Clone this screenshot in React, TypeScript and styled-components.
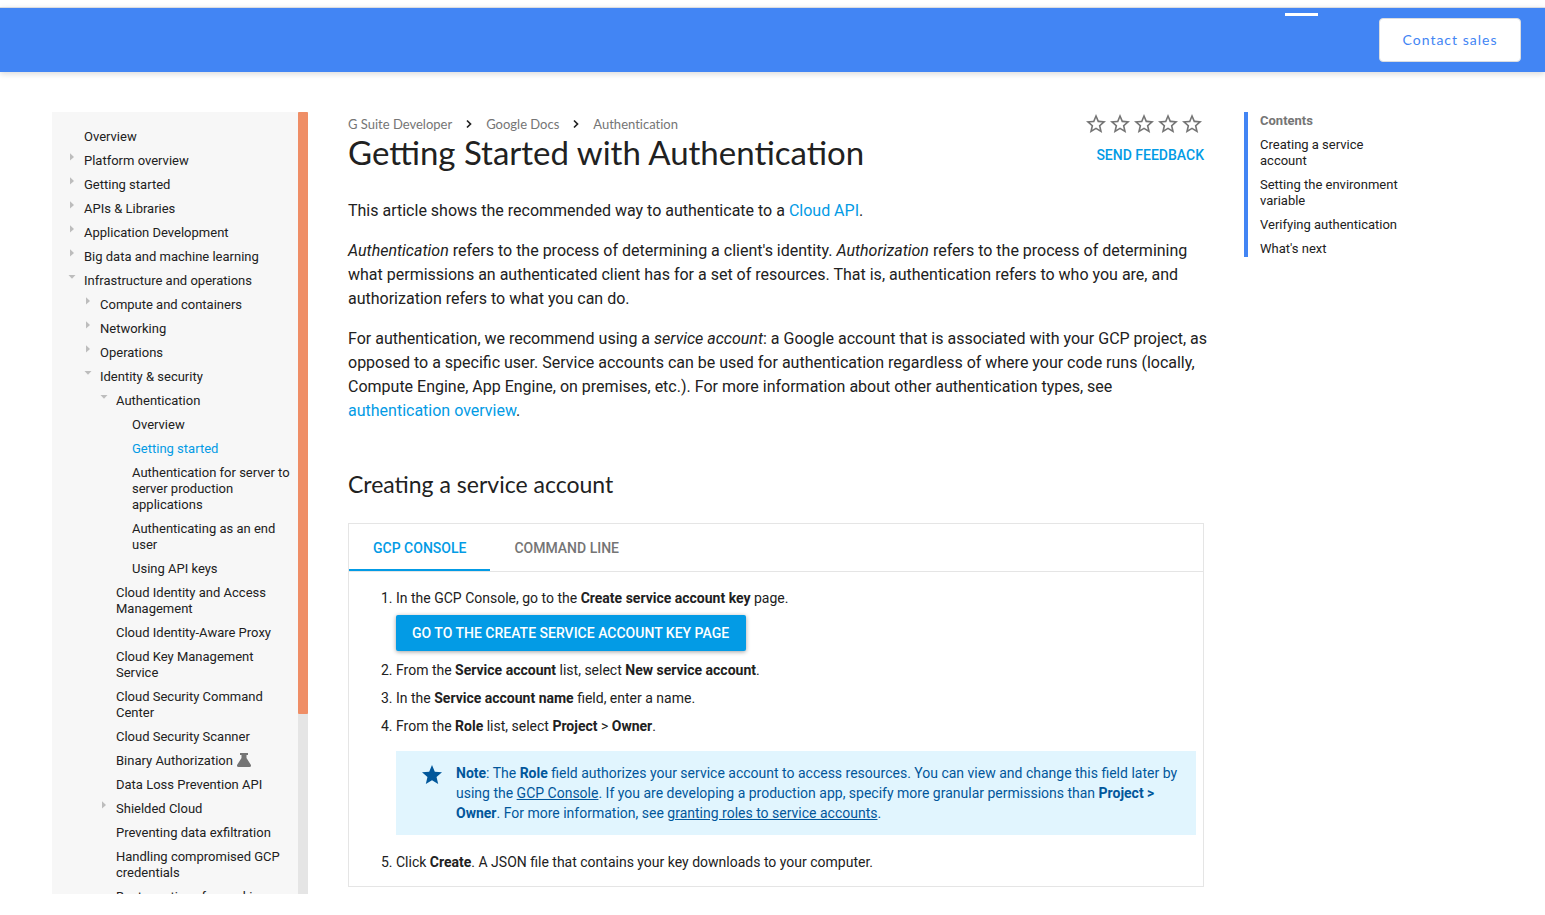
import React from "react";
import styled, { createGlobalStyle } from "styled-components";

const heading = `Lato, "Open Sans", sans-serif`;

const GlobalStyle = createGlobalStyle`
  *, *::before, *::after { box-sizing: border-box; }
  body {
    margin: 0;
    background: #fff;
    color: #212121;
    font: 400 16px/24px Roboto, sans-serif;
  }
  a { color: #039be5; text-decoration: none; }
`;

const Page = styled.div`
  padding-top: 7px;
  display: flex;
  flex-direction: column;
`;

const TopBar = styled.header`
  display: flex;
  justify-content: flex-end;
  align-items: flex-start;
  gap: 61px;
  height: 65px;
  padding: 0 24px;
  border-top: 1px solid #dadce0;
  background: #4285f4;
  box-shadow: 0 2px 6px rgba(0, 0, 0, 0.15);
`;

const TabMark = styled.span`
  width: 33px;
  height: 3px;
  margin-top: 5px;
  background: #fff;
`;

const SalesButton = styled.button`
  height: 44px;
  width: 142px;
  margin-top: 10px;
  padding: 0;
  border: 1px solid #dadce0;
  border-radius: 4px;
  background: #fff;
  color: #4285f4;
  font: 400 14px/24px ${heading};
  letter-spacing: 1px;
`;

const Body = styled.div`
  display: flex;
  align-items: flex-start;
  gap: 40px;
  padding: 40px 145px 21px 52px;
`;

const Sidebar = styled.nav`
  display: flex;
  flex: 0 0 256px;
  height: calc(100vh - 133px);
  overflow: hidden;
  background: #f7f7f7;
`;

const NavList = styled.ul`
  flex: 1;
  margin: 0;
  padding: 13px 8px 0 16px;
  list-style: none;
`;

const NavItem = styled.li<{ $level: number }>`
  display: flex;
  align-items: flex-start;
  padding: 4px 0 4px ${(p) => p.$level * 16}px;
`;

const ArrowSlot = styled.span`
  display: flex;
  flex: 0 0 16px;
  color: #bdbdbd;
`;

const NavLink = styled.a<{ $current?: boolean }>`
  color: ${(p) => (p.$current ? "#039be5" : "#212121")};
  font-size: 13px;
  line-height: 16px;
`;

const FlaskSlot = styled.span`
  display: flex;
  margin-left: 4px;
`;

const ScrollTrack = styled.div`
  flex: 0 0 10px;
  background: #e5e5e5;
`;

const ScrollThumb = styled.div`
  height: 77%;
  border-radius: 1px;
  background: #ef8e66;
`;

const Article = styled.main`
  flex: 1;
  min-width: 0;
`;

const ArticleHead = styled.div`
  display: flex;
  justify-content: space-between;
`;

const Crumbs = styled.nav`
  display: flex;
  align-items: center;
  gap: 14px;
  height: 24px;
  font: 400 13px/24px ${heading};
  font-variant-ligatures: none;
  a { color: #757575; }
`;

const Title = styled.h1`
  margin: 0;
  font: 400 33px/32px ${heading};
`;

const Rating = styled.div`
  display: flex;
  flex-direction: column;
  align-items: flex-end;
  gap: 7px;
`;

const Stars = styled.div`
  display: flex;
`;

const StarButton = styled.button`
  display: flex;
  padding: 0;
  border: 0;
  background: none;
  color: #757575;
`;

const Feedback = styled.button`
  padding: 0;
  border: 0;
  background: none;
  color: #039be5;
  font: 500 14px/24px Roboto, sans-serif;
`;

const Text = styled.p`
  margin: 16px -8px 16px 0;
  &:first-of-type { margin-top: 31px; }
`;

const Subtitle = styled.h2`
  margin: 45px 0 23px;
  font: 400 23px/32px ${heading};
`;

const Panel = styled.section`
  border: 1px solid #e5e5e5;
`;

const Tabs = styled.div`
  display: flex;
  height: 48px;
  border-bottom: 1px solid #e5e5e5;
`;

const Tab = styled.button<{ $active?: boolean }>`
  padding: 2px 24px 0;
  border: 0;
  border-bottom: 2px solid ${(p) => (p.$active ? "#039be5" : "transparent")};
  background: none;
  color: ${(p) => (p.$active ? "#039be5" : "#757575")};
  font: 500 14px/24px Roboto, sans-serif;
`;

const Steps = styled.ol`
  display: flex;
  flex-direction: column;
  gap: 8px;
  margin: 0;
  padding: 16px 7px 14px 47px;
  font-size: 14px;
  line-height: 20px;
`;

const KeyButton = styled.a`
  display: block;
  width: fit-content;
  margin: 7px 0 1px;
  padding: 0 17px 0 16px;
  border-radius: 2px;
  background: #039be5;
  box-shadow: 0 1px 4px rgba(0, 0, 0, 0.37);
  color: #fff;
  font-weight: 500;
  line-height: 36px;
`;

const Note = styled.aside`
  display: flex;
  gap: 12px;
  margin: 15px 0 9px;
  padding: 12px 12px 12px 24px;
  background: #e1f5fe;
  color: #01579b;
  line-height: 20px;
  a { color: inherit; text-decoration: underline; }
  svg { flex: none; }
`;

const Contents = styled.nav`
  flex: 0 0 156px;
  border-left: 4px solid #4285f4;
  padding: 1px 0 0 12px;
  font-size: 13px;
  line-height: 16px;
`;

const ContentsTitle = styled.h2`
  margin: 0;
  color: #757575;
  font-size: 13px;
  font-weight: 700;
  line-height: 16px;
`;

const ContentsList = styled.ul`
  display: flex;
  flex-direction: column;
  gap: 8px;
  margin: 8px 0 0;
  padding: 0;
  list-style: none;
  a { color: #212121; }
`;

type Item = {
  text: string;
  level: number;
  arrow?: "closed" | "open";
  current?: boolean;
  beta?: boolean;
};

const items: Item[] = [
  { text: "Overview", level: 0 },
  { text: "Platform overview", level: 0, arrow: "closed" },
  { text: "Getting started", level: 0, arrow: "closed" },
  { text: "APIs & Libraries", level: 0, arrow: "closed" },
  { text: "Application Development", level: 0, arrow: "closed" },
  { text: "Big data and machine learning", level: 0, arrow: "closed" },
  { text: "Infrastructure and operations", level: 0, arrow: "open" },
  { text: "Compute and containers", level: 1, arrow: "closed" },
  { text: "Networking", level: 1, arrow: "closed" },
  { text: "Operations", level: 1, arrow: "closed" },
  { text: "Identity & security", level: 1, arrow: "open" },
  { text: "Authentication", level: 2, arrow: "open" },
  { text: "Overview", level: 3 },
  { text: "Getting started", level: 3, current: true },
  { text: "Authentication for server to server production applications", level: 3 },
  { text: "Authenticating as an end user", level: 3 },
  { text: "Using API keys", level: 3 },
  { text: "Cloud Identity and Access Management", level: 2 },
  { text: "Cloud Identity-Aware Proxy", level: 2 },
  { text: "Cloud Key Management Service", level: 2 },
  { text: "Cloud Security Command Center", level: 2 },
  { text: "Cloud Security Scanner", level: 2 },
  { text: "Binary Authorization", level: 2, beta: true },
  { text: "Data Loss Prevention API", level: 2 },
  { text: "Shielded Cloud", level: 2, arrow: "closed" },
  { text: "Preventing data exfiltration", level: 2 },
  { text: "Handling compromised GCP credentials", level: 2 },
  { text: "Best practices for working", level: 2 },
];

const sections = [
  "Creating a service account",
  "Setting the environment variable",
  "Verifying authentication",
  "What's next",
];

const Arrow = ({ open }: { open: boolean }) => (
  <svg width="8" height="10" viewBox="0 0 8 10" fill="currentColor" aria-hidden="true">
    <path d={open ? "M.5 2h7L4 5.8z" : "M2 .2v7.400L6 3.900z"} />
  </svg>
);

const Flask = () => (
  <svg width="14" height="14" viewBox="0 0 14 14" fill="#757575" aria-label="Beta">
    <path d="M3 0h8v2H9.500v3l4.300 6.800Q14.600 14 12.500 14h-11Q-.6 14 .2 11.800L4.500 5V2H3z" />
  </svg>
);

const OutlineStar = () => (
  <svg width="24" height="24" viewBox="0 0 24 24" fill="currentColor" aria-hidden="true">
    <path d="M22 9.240l-7.190-.62L12 2 9.190 8.630 2 9.240l5.460 4.730L5.820 21 12 17.270 18.180 21l-1.630-7.030L22 9.240zM12 15.400l-3.760 2.270 1-4.280-3.320-2.880 4.380-.38L12 6.100l1.710 4.040 4.380.38-3.320 2.880 1 4.280L12 15.400z" />
  </svg>
);

const SolidStar = () => (
  <svg width="24" height="24" viewBox="0 0 24 24" fill="currentColor" aria-hidden="true">
    <path d="M12 17.270L18.180 21l-1.640-7.030L22 9.240l-7.190-.61L12 2 9.190 8.630 2 9.240l5.460 4.730L5.820 21z" />
  </svg>
);

const Chevron = () => (
  <svg width="6" height="10" viewBox="0 0 6 10" fill="none" stroke="#212121" strokeWidth="1.700" aria-hidden="true">
    <path d="M1 1.500L4.500 5 1 8.500" />
  </svg>
);

export default function App() {
  return (
    <>
      <GlobalStyle />
      <Page>
        <TopBar>
          <TabMark />
          <SalesButton type="button">Contact sales</SalesButton>
        </TopBar>
        <Body>
          <Sidebar aria-label="Documentation">
            <NavList>
              {items.map((item, i) => (
                <NavItem key={i} $level={item.level}>
                  <ArrowSlot>{item.arrow && <Arrow open={item.arrow === "open"} />}</ArrowSlot>
                  <NavLink href="#" $current={item.current}>{item.text}</NavLink>
                  {item.beta && <FlaskSlot><Flask /></FlaskSlot>}
                </NavItem>
              ))}
            </NavList>
            <ScrollTrack><ScrollThumb /></ScrollTrack>
          </Sidebar>
          <Article>
            <ArticleHead>
              <div>
                <Crumbs aria-label="Breadcrumb">
                  <a href="#">G Suite Developer</a>
                  <Chevron />
                  <a href="#">Google Docs</a>
                  <Chevron />
                  <a href="#">Authentication</a>
                </Crumbs>
                <Title>Getting Started with Authentication</Title>
              </div>
              <Rating>
                <Stars>
                  {[1, 2, 3, 4, 5].map((n) => (
                    <StarButton key={n} type="button" aria-label={`Rate ${n} of 5`}><OutlineStar /></StarButton>
                  ))}
                </Stars>
                <Feedback type="button">SEND FEEDBACK</Feedback>
              </Rating>
            </ArticleHead>
            <Text>
              This article shows the recommended way to authenticate to a <a href="#">Cloud API</a>.
            </Text>
            <Text>
              <em>Authentication</em> refers to the process of determining a client's identity. <em>Authorization</em>{" "}
              refers to the process of determining what permissions an authenticated client has for a set of resources.
              That is, authentication refers to who you are, and authorization refers to what you can do.
            </Text>
            <Text>
              For authentication, we recommend using a <em>service account</em>: a Google account that is associated
              with your GCP project, as opposed to a specific user. Service accounts can be used for authentication
              regardless of where your code runs (locally, Compute Engine, App Engine, on premises, etc.). For more
              information about other authentication types, see <a href="#">authentication overview</a>.
            </Text>
            <Subtitle>Creating a service account</Subtitle>
            <Panel>
              <Tabs role="tablist">
                <Tab type="button" role="tab" aria-selected="true" $active>GCP CONSOLE</Tab>
                <Tab type="button" role="tab" aria-selected="false">COMMAND LINE</Tab>
              </Tabs>
              <Steps>
                <li>
                  In the GCP Console, go to the <b>Create service account key</b> page.
                  <KeyButton href="#">GO TO THE CREATE SERVICE ACCOUNT KEY PAGE</KeyButton>
                </li>
                <li>From the <b>Service account</b> list, select <b>New service account</b>.</li>
                <li>In the <b>Service account name</b> field, enter a name.</li>
                <li>
                  From the <b>Role</b> list, select <b>Project</b> &gt; <b>Owner</b>.
                  <Note>
                    <SolidStar />
                    <div>
                      <b>Note</b>: The <b>Role</b> field authorizes your service account to access resources. You can
                      view and change this field later by using the <a href="#">GCP Console</a>. If you are developing
                      a production app, specify more granular permissions than <b>Project &gt; Owner</b>. For more
                      information, see <a href="#">granting roles to service accounts</a>.
                    </div>
                  </Note>
                </li>
                <li>Click <b>Create</b>. A JSON file that contains your key downloads to your computer.</li>
              </Steps>
            </Panel>
          </Article>
          <Contents aria-label="Contents">
            <ContentsTitle>Contents</ContentsTitle>
            <ContentsList>
              {sections.map((s) => (
                <li key={s}><a href="#">{s}</a></li>
              ))}
            </ContentsList>
          </Contents>
        </Body>
      </Page>
    </>
  );
}
